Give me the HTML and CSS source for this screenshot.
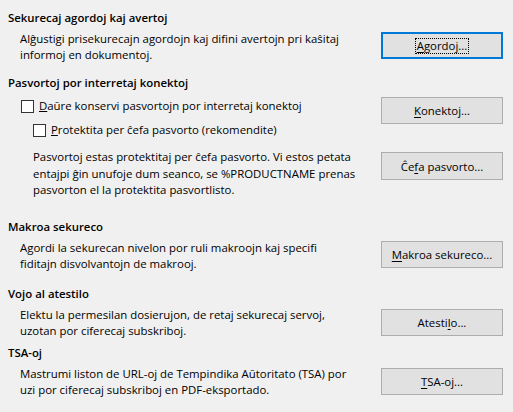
FILE: index.html
```html
<!DOCTYPE html>
<html lang="eo">
<head>
<meta charset="utf-8">
<title>Sekureco</title>
<link rel="stylesheet" href="styles.css">
</head>
<body>
<div class="page">
  <section class="sec sec1">
    <div class="head">Sekurecaj agordoj kaj avertoj</div>
    <div class="row">
      <p class="desc">Alĝustigi prisekurecajn agordojn kaj difini avertojn pri kaŝitaj<br>informoj en dokumentoj.</p>
      <button class="btn focus b1"><span class="lbl"><u>A</u>gordoj...</span></button>
    </div>
  </section>

  <section class="sec sec2">
    <div class="head">Pasvortoj por interretaj konektoj</div>
    <div class="row">
      <div class="left">
        <label class="chk c1"><span class="box"></span><span><u>D</u>aŭre konservi pasvortojn por interretaj konektoj</span></label>
        <label class="chk c2"><span class="box"></span><span><u>P</u>rotektita per ĉefa pasvorto (rekomendite)</span></label>
        <p class="desc indent">Pasvortoj estas protektitaj per ĉefa pasvorto. Vi estos petata<br>entajpi ĝin unufoje dum seanco, se %PRODUCTNAME prenas<br>pasvorton el la protektita pasvortlisto.</p>
      </div>
      <div class="right">
        <button class="btn b2"><span class="lbl"><u>K</u>onektoj...</span></button>
        <button class="btn b3"><span class="lbl">Ĉe<u>f</u>a pasvorto...</span></button>
      </div>
    </div>
  </section>

  <section class="sec sec3">
    <div class="head">Makroa sekureco</div>
    <div class="row">
      <p class="desc">Agordi la sekurecan nivelon por ruli makroojn kaj specifi<br>fiditajn disvolvantojn de makrooj.</p>
      <button class="btn b4"><span class="lbl"><u>M</u>akroa sekureco...</span></button>
    </div>
  </section>

  <section class="sec sec4">
    <div class="head">Vojo al atestilo</div>
    <div class="row">
      <p class="desc">Elektu la permesilan dosierujon, de retaj sekurecaj servoj,<br>uzotan por ciferecaj subskriboj.</p>
      <button class="btn b5"><span class="lbl">Atesti<u>l</u>o...</span></button>
    </div>
  </section>

  <section class="sec sec5">
    <div class="head">TSA-oj</div>
    <div class="row">
      <p class="desc">Mastrumi liston de URL-oj de Tempindika Aŭtoritato (TSA) por<br>uzi por ciferecaj subskriboj en PDF-eksportado.</p>
      <button class="btn b6"><span class="lbl"><u>T</u>SA-oj...</span></button>
    </div>
  </section>
</div>
</body>
</html>
```

FILE: styles.css
```css
html, body {
  margin: 0;
  padding: 0;
  background: #f0f0f0;
}
body {
  font-family: "Open Sans", "Noto Sans", sans-serif;
  font-size: 11.4px;
  color: #000;
  width: 513px;
  height: 412px;
  overflow: hidden;
}
.page {
  padding: 10px 10px 0 8px;
}
.sec {
  display: flex;
  flex-direction: column;
}
.head {
  font-weight: 600;
  line-height: 16px;
  height: 16px;
}
.row {
  display: flex;
  justify-content: space-between;
  align-items: flex-start;
  margin-top: 5px;
}
.desc {
  margin: 0;
  padding-left: 12px;
  line-height: 16px;
  white-space: nowrap;
}
.desc.indent {
  padding-left: 25px;
  line-height: 16.5px;
}
.btn {
  width: 122px;
  height: 27px;
  box-sizing: border-box;
  background: #e1e1e1;
  border: 1px solid #adadad;
  border-radius: 0;
  font-family: inherit;
  font-size: 11.4px;
  color: #000;
  padding: 0;
  margin: 0;
  display: flex;
  align-items: center;
  justify-content: center;
  flex: none;
}
.btn u {
  text-underline-offset: 2px;
}
.btn.focus {
  border: 2px solid #0078d7;
}
.btn.focus .lbl {
  outline: 1px dotted #000;
  padding: 0 1px;
  line-height: 14px;
}
.b1 { margin-top: 1px; }
.sec2 { margin-top: 12px; }
.sec2 .row { margin-top: 6px; }
.left {
  display: flex;
  flex-direction: column;
}
.right {
  display: flex;
  flex-direction: column;
}
.b3 {
  margin-top: 28px;
  height: 28px;
}
.chk {
  display: flex;
  align-items: center;
  line-height: 16px;
}
.chk .box {
  width: 13px;
  height: 13px;
  box-sizing: border-box;
  border: 1px solid #333;
  background: #fff;
  margin-right: 5px;
  flex: none;
}
.c1 {
  margin-top: 1px;
  padding-left: 13px;
}
.c2 {
  margin-top: 8px;
  padding-left: 25px;
}
.indent { margin-top: 11px; }
.sec3 { margin-top: 20px; }
.b4 { margin-top: 1px; }
.sec4 { margin-top: 14px; }
.b5 { margin-top: 2px; }
.sec5 { margin-top: 6px; }
.b6 { margin-top: 2px; }
u {
  text-decoration-thickness: 1px;
}
```
